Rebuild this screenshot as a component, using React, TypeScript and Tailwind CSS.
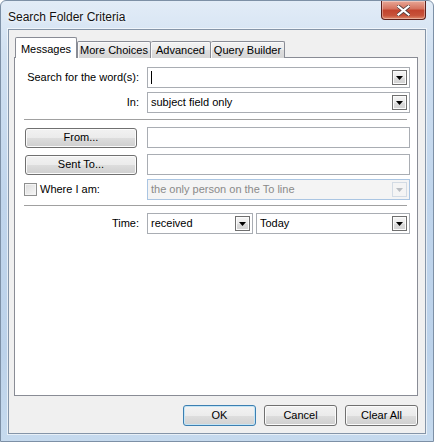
import React from "react";

function Arrow({ disabled }: { disabled?: boolean }) {
  return (
    <div
      className={`w-[15px] h-[15px] shrink-0 flex items-center justify-center border ${
        disabled
          ? "border-[#d3dbe4] bg-[#f4f4f4]"
          : "border-[#6f6f6f] bg-[linear-gradient(#f6f6f6,#e9e9e9_50%,#dcdcdc_51%,#d2d2d2)] shadow-[inset_0_0_0_1px_#fbfbfb]"
      }`}
    >
      <svg width="7" height="4" viewBox="0 0 7 4">
        <path d="M0 0H7L3.5 4Z" fill={disabled ? "#b9bdc2" : "#000"} />
      </svg>
    </div>
  );
}

function Combo({
  text,
  disabled,
  caret,
  className = "",
}: {
  text?: string;
  disabled?: boolean;
  caret?: boolean;
  className?: string;
}) {
  return (
    <div
      className={`h-[21px] flex items-center justify-between border pl-[3px] pr-[2px] ${
        disabled ? "border-[#aac5e2] bg-[#f4f4f4] text-[#8a8a8a]" : "border-[#a9adb3] bg-white text-black"
      } ${className}`}
    >
      <span className="flex items-center leading-none whitespace-nowrap">
        {caret && <span className="inline-block w-px h-[13px] bg-black" />}
        {text}
      </span>
      <Arrow disabled={disabled} />
    </div>
  );
}

function TextBox() {
  return <div className="h-[21px] border border-[#a9adb3] bg-white flex-1" />;
}

function Btn({ label, className = "", def }: { label: string; className?: string; def?: boolean }) {
  return (
    <div
      className={`flex items-center justify-center rounded-[3px] border text-black ${
        def
          ? "border-[#3c7fb1] shadow-[inset_0_0_0_1px_#c4e5f6] bg-[linear-gradient(#f3f3f3,#ececec_50%,#dedede_51%,#d2d2d2)]"
          : "border-[#707070] shadow-[inset_0_0_0_1px_#fbfbfb] bg-[linear-gradient(#f2f2f2,#ebebeb_50%,#dddddd_51%,#cfcfcf)]"
      } ${className}`}
    >
      {label}
    </div>
  );
}

function Row({ label, children, className = "" }: { label: React.ReactNode; children: React.ReactNode; className?: string }) {
  return (
    <div className={`flex items-center ${className}`}>
      <div className="w-[115px] shrink-0 text-right">{label}</div>
      <div className="ml-[8px] flex-1 flex gap-[3px]">{children}</div>
    </div>
  );
}

export default function App() {
  return (
    <div className="w-[434px] h-[442px] flex flex-col font-['Liberation_Sans',Arial,sans-serif] text-[11px] text-black border border-[#7d90a6] rounded-t-[6px] bg-[linear-gradient(to_bottom,#e2ecf7_0%,#d0e0f1_12%,#c0d5ec_45%,#bcd2ea_80%,#c6daee_100%)] overflow-hidden">
      {/* title bar */}
      <div className="h-[28px] flex items-start justify-between pl-[7px] pr-[7px]">
        <div className="mt-[7px] text-[12px] text-[#111] [text-shadow:0_0_6px_#ffffff,0_0_3px_#ffffff]">
          Search Folder Criteria
        </div>
        <div className="w-[45px] h-[19px] rounded-b-[4px] border border-t-0 border-[#5b1f1a] bg-[linear-gradient(#e8a796,#d4705c_45%,#c2432d_50%,#c7523a_80%,#e08a6c)] shadow-[inset_0_0_0_1px_rgba(255,255,255,0.35)] flex items-center justify-center">
          <svg width="13" height="11" viewBox="0 0 13 11">
            <path d="M1.5 1.5L11.5 9.5M11.5 1.5L1.5 9.5" stroke="#4a3a3a" strokeWidth="3.6" strokeLinecap="square" />
            <path d="M1.5 1.5L11.5 9.5M11.5 1.5L1.5 9.5" stroke="#ffffff" strokeWidth="2.2" strokeLinecap="square" />
          </svg>
        </div>
      </div>

      {/* client area */}
      <div className="mx-[7px] w-[418px] h-[405px] border border-[#8595a8] bg-[#f0f0f0] shadow-[0_0_0_1px_rgba(255,255,255,0.6)] flex flex-col pt-[7px] pl-[5px] pr-[7px] pb-[7px]">
        {/* tabs */}
        <div className="flex items-end pl-[1px] h-[21px] relative z-10 -mb-px">
          <div className="w-[62px] h-[21px] bg-white border border-b-0 border-[#898c95] rounded-t-[2px] flex items-start justify-center pt-[3px]">
            Messages
          </div>
          <div className="w-[74px] h-[17px] border border-b-0 border-[#898c95] rounded-t-[2px] shadow-[inset_1px_1px_0_#fafafa] bg-[linear-gradient(#f3f3f3,#ebebeb_50%,#dedede_51%,#d6d6d6)] flex items-center justify-center">
            More Choices
          </div>
          <div className="w-[60px] h-[17px] border border-b-0 border-l-0 border-[#898c95] rounded-t-[2px] shadow-[inset_1px_1px_0_#fafafa] bg-[linear-gradient(#f3f3f3,#ebebeb_50%,#dedede_51%,#d6d6d6)] flex items-center justify-center">
            Advanced
          </div>
          <div className="w-[74px] h-[17px] border border-b-0 border-l-0 border-[#898c95] rounded-t-[2px] shadow-[inset_1px_1px_0_#fafafa] bg-[linear-gradient(#f3f3f3,#ebebeb_50%,#dedede_51%,#d6d6d6)] flex items-center justify-center">
            Query Builder
          </div>
        </div>

        {/* panel */}
        <div className="h-[339px] border border-[#898c95] bg-white pl-[9px] pr-[7px] pt-[9px] flex flex-col">
          <Row label="Search for the word(s):">
            <Combo caret className="flex-1" />
          </Row>
          <Row label="In:" className="mt-[4px]">
            <Combo text="subject field only" className="flex-1" />
          </Row>
          <div className="mt-[6px] mr-[3px] h-px bg-[#a0a0a0]" />
          <div className="mt-[7px] flex items-center">
            <div className="w-[115px] shrink-0 pl-[1px]">
              <Btn label="From..." className="w-[112px] h-[20px]" />
            </div>
            <div className="ml-[8px] flex-1 flex">
              <TextBox />
            </div>
          </div>
          <div className="mt-[6px] flex items-center">
            <div className="w-[115px] shrink-0 pl-[1px]">
              <Btn label="Sent To..." className="w-[112px] h-[20px]" />
            </div>
            <div className="ml-[8px] flex-1 flex">
              <TextBox />
            </div>
          </div>
          <div className="mt-[4px] flex items-center">
            <div className="w-[115px] shrink-0 flex items-center gap-[3px]">
              <div className="w-[13px] h-[13px] border border-[#8e8f8f] bg-[linear-gradient(135deg,#dcdcdc,#f7f7f7)] shadow-[inset_0_0_0_1px_#f4f4f4]" />
              <span>Where I am:</span>
            </div>
            <div className="ml-[8px] flex-1 flex">
              <Combo text="the only person on the To line" disabled className="flex-1" />
            </div>
          </div>
          <div className="mt-[5px] mr-[3px] h-px bg-[#a0a0a0]" />
          <Row label="Time:" className="mt-[7px]">
            <Combo text="received" className="w-[106px]" />
            <Combo text="Today" className="flex-1" />
          </Row>
        </div>

        {/* buttons */}
        <div className="mt-[9px] flex justify-end gap-[8px]">
          <Btn label="OK" def className="w-[73px] h-[21px]" />
          <Btn label="Cancel" className="w-[73px] h-[21px]" />
          <Btn label="Clear All" className="w-[73px] h-[21px]" />
        </div>
      </div>
    </div>
  );
}
